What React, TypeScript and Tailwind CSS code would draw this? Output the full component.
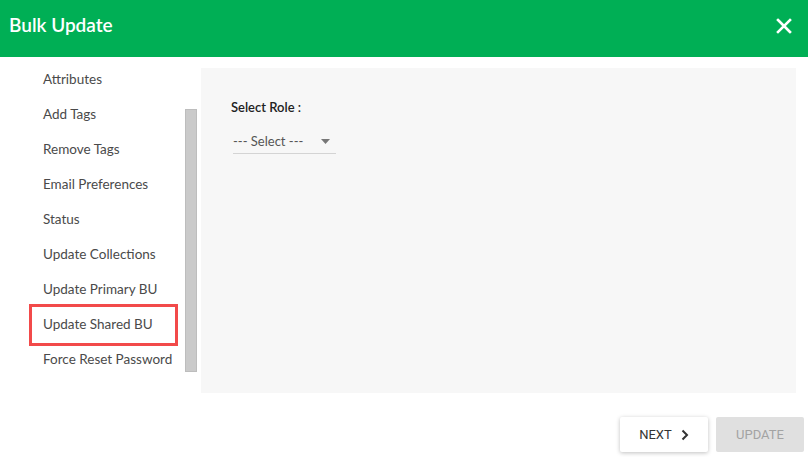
import React from 'react';

const items = [
  'Attributes',
  'Add Tags',
  'Remove Tags',
  'Email Preferences',
  'Status',
  'Update Collections',
  'Update Primary BU',
  'Update Shared BU',
  'Force Reset Password',
];

const App = () => {
  return (
    <div className="w-[808px] h-[457px] bg-white overflow-hidden font-['Lato',sans-serif] text-[#333]">
      <header className="h-[57px] bg-[#00af55] flex items-center justify-between pl-[9px] pr-[16px] pb-[6px]">
        <h1 className="text-white text-[19px] font-semibold">Bulk Update</h1>
        <svg width="16" height="16" viewBox="0 0 16 16" className="text-white">
          <path d="M2 2 L14 14 M14 2 L2 14" stroke="currentColor" strokeWidth="2.6" strokeLinecap="square" />
        </svg>
      </header>

      <div className="flex pt-[5px] h-[336px]">
        <div className="w-[201px] flex shrink-0">
          <ul className="w-[185px]">
            {items.map((item) => (
              <li key={item} className="h-[35px] flex items-center pl-[29px]">
                <span
                  className={
                    item === 'Update Shared BU'
                      ? 'w-[149px] h-[42px] flex items-center pl-[11px] border-[3px] border-[#f24a4a] text-[13.5px] text-[#4a4a4a]'
                      : 'pl-[14px] text-[13.5px] text-[#4a4a4a]'
                  }
                >
                  {item}
                </span>
              </li>
            ))}
          </ul>
          <div className="pt-[47px]">
            <div className="w-[12px] h-[263px] bg-[#cacaca] border border-[#bdbdbd]" />
          </div>
        </div>

        <div className="mt-[6px] w-[595px] h-[325px] bg-[#f7f7f7] pl-[30px] pt-[30px]">
          <div className="text-[13px] font-semibold text-[#222]">Select Role :</div>
          <div className="mt-[13px] ml-[2px] w-[103px] h-[23px] border-b border-[#d4d4d4] flex items-center justify-between pr-[6px]">
            <span className="text-[13px] text-[#555]">--- Select ---</span>
            <svg width="9" height="5" viewBox="0 0 9 5">
              <path d="M0 0 H9 L4.5 5 Z" fill="#777" />
            </svg>
          </div>
        </div>
      </div>

      <div className="flex justify-end gap-[8px] pr-[4px] pt-[24px]">
        <button className="w-[88px] h-[35px] bg-white rounded-[2px] shadow-[0_1px_4px_rgba(0,0,0,0.25)] flex items-center justify-center gap-[9px] text-[13px] text-[#333] font-['Roboto',sans-serif]">
          NEXT
          <svg width="8" height="12" viewBox="0 0 8 12">
            <path d="M1.5 1.5 L6 6 L1.5 10.5" stroke="#333" strokeWidth="2" fill="none" />
          </svg>
        </button>
        <button className="w-[88px] h-[35px] bg-[#e0e0e0] rounded-[2px] flex items-center justify-center text-[13px] text-[#a3a3a3] font-['Roboto',sans-serif]">
          UPDATE
        </button>
      </div>
    </div>
  );
};

export default App;
